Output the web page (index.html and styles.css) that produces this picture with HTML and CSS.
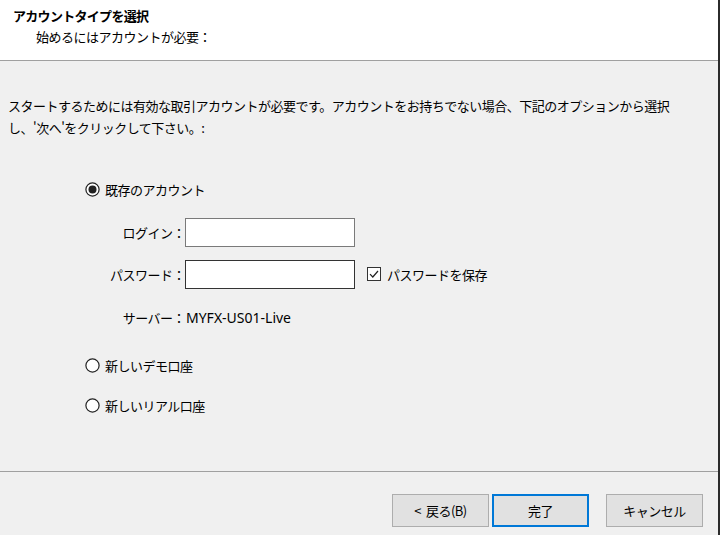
FILE: index.html
```html
<!DOCTYPE html>
<html lang="ja">
<head>
<meta charset="utf-8">
<link rel="stylesheet" href="styles.css">
</head>
<body>
<div class="dialog">
  <header class="head">
    <div class="title">アカウントタイプを選択</div>
    <div class="subtitle">始めるにはアカウントが必要：</div>
  </header>
  <main class="content">
    <p class="intro">スタートするためには有効な取引アカウントが必要です。アカウントをお持ちでない場合、下記のオプションから選択し、'次へ'をクリックして下さい。:</p>
    <div class="options">
      <div class="radio-row first">
        <svg class="radio" width="15" height="15" viewBox="0 0 15 15"><circle cx="7.5" cy="7.5" r="6.6" fill="#fff" stroke="#222" stroke-width="1.2"/><circle cx="7.5" cy="7.5" r="4" fill="#222"/></svg>
        <span>既存のアカウント</span>
      </div>
      <div class="form">
        <div class="field">
          <span class="label">ログイン：</span>
          <span class="input"></span>
        </div>
        <div class="field">
          <span class="label">パスワード：</span>
          <span class="input dark"></span>
          <span class="check">
            <svg width="14" height="14" viewBox="0 0 14 14"><rect x="0.5" y="0.5" width="13" height="13" fill="#fff" stroke="#333"/><path d="M3 7.2 L5.8 10 L11 4" fill="none" stroke="#222" stroke-width="1.2"/></svg>
            <span>パスワードを保存</span>
          </span>
        </div>
        <div class="field server">
          <span class="label">サーバー：</span>
          <span class="value">MYFX-US01-Live</span>
        </div>
      </div>
      <div class="radio-row second">
        <svg class="radio" width="15" height="15" viewBox="0 0 15 15"><circle cx="7.5" cy="7.5" r="6.6" fill="#fff" stroke="#222" stroke-width="1.2"/></svg>
        <span>新しいデモ口座</span>
      </div>
      <div class="radio-row third">
        <svg class="radio" width="15" height="15" viewBox="0 0 15 15"><circle cx="7.5" cy="7.5" r="6.6" fill="#fff" stroke="#222" stroke-width="1.2"/></svg>
        <span>新しいリアル口座</span>
      </div>
    </div>
  </main>
  <footer class="foot">
    <div class="buttons">
      <button class="btn"><span class="lt">&lt;</span>戻る(B)</button>
      <button class="btn primary">完了</button>
      <button class="btn cancel">キャンセル</button>
    </div>
  </footer>
</div>
</body>
</html>
```
FILE: styles.css
```css
html, body {
  margin: 0;
  padding: 0;
  background: #f0f0f0;
}
body {
  font-family: "Noto Sans CJK JP", "Noto Sans", sans-serif;
  font-size: 13px;
  color: #000;
  letter-spacing: -0.5px;
}
.dialog {
  width: 718px;
  height: 535px;
  border-right: 2px solid #2b2b2b;
  display: flex;
  flex-direction: column;
  background: #f0f0f0;
}
.head {
  background: #fff;
  height: 60px;
  border-bottom: 1px solid #a0a0a0;
}
.title {
  font-weight: bold;
  padding: 6px 0 0 13px;
  line-height: 20px;
  letter-spacing: -0.7px;
}
.subtitle {
  padding: 1px 0 0 36px;
  line-height: 20px;
}
.content {
  flex: 1;
  border-bottom: 1px solid #a0a0a0;
}
.intro {
  margin: 34px 0 0 8px;
  width: 680px;
  line-height: 22px;
}
.options {
  padding-left: 85px;
  margin-top: 39px;
}
.radio-row {
  display: flex;
  align-items: center;
  gap: 5px;
  height: 22px;
}
.radio {
  display: block;
  flex: none;
}
.form {
  margin-top: 17px;
  display: flex;
  flex-direction: column;
  gap: 12px;
}
.field {
  display: flex;
  align-items: center;
  height: 30px;
  margin-left: 1px;
}
.label {
  width: 99px;
  text-align: right;
}
.input {
  width: 168px;
  height: 27px;
  border: 1px solid #7a7a7a;
  background: #fff;
}
.input.dark {
  border-color: #333;
}
.check {
  display: flex;
  align-items: center;
  gap: 6px;
  margin-left: 12px;
}
.check svg {
  display: block;
}
.server {
  margin-top: 5px;
  height: 22px;
}
.value {
  margin-left: 1px;
  font-family: "Noto Sans", sans-serif;
  font-size: 14px;
  letter-spacing: 0;
}
.radio-row.second {
  margin-top: 26px;
}
.radio-row.third {
  margin-top: 18px;
}
.foot {
  height: 63px;
}
.buttons {
  display: flex;
  padding: 22px 0 0 392px;
}
.btn {
  width: 97px;
  height: 33px;
  background: #e1e1e1;
  border: 1px solid #adadad;
  font-family: inherit;
  font-size: 13px;
  color: #000;
  padding: 0;
  margin: 0;
  letter-spacing: -0.5px;
}
.lt {
  margin-right: 5px;
}
.btn.primary {
  border: 2px solid #0078d7;
  margin-left: 3px;
}
.btn.cancel {
  margin-left: 17px;
}
```
